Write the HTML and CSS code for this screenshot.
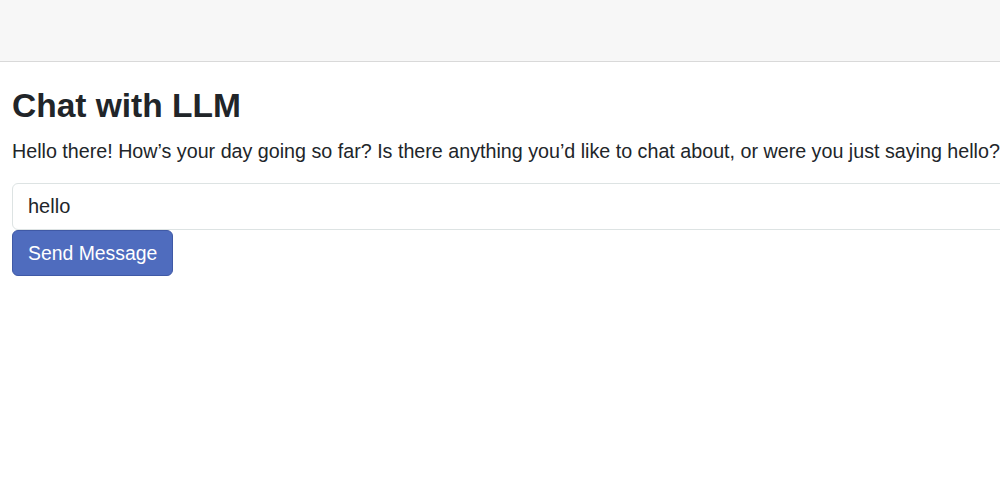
FILE: index.html
```html
<!DOCTYPE html>
<html lang="en">
<head>
<meta charset="utf-8">
<title>Chat with LLM</title>
<link rel="stylesheet" href="styles.css">
</head>
<body>
<header class="topbar"></header>
<main class="chat">
  <h1 class="chat-title">Chat with LLM</h1>
  <p class="chat-reply">Hello there! How’s your day going so far? Is there anything you’d like to chat about, or were you just saying hello?</p>
  <form class="chat-form">
    <input class="chat-input" type="text" value="hello">
    <button class="chat-send" type="button">Send Message</button>
  </form>
</main>
</body>
</html>
```
FILE: styles.css
```css
html, body {
  margin: 0;
  padding: 0;
  overflow: hidden;
  background: #ffffff;
}
body {
  font-family: "Liberation Sans", Arial, sans-serif;
  color: #212529;
  width: 1000px;
}
.topbar {
  height: 61px;
  background: #f7f7f7;
  border-bottom: 1px solid #d9d9d9;
}
.chat {
  padding: 0 12px;
  width: 1200px;
}
.chat-title {
  margin: 24px 0 0;
  font-size: 33.5px;
  font-weight: bold;
  line-height: 40px;
  color: #212529;
}
.chat-reply {
  margin: 10px 0 0;
  font-size: 19.7px;
  line-height: 30px;
  white-space: nowrap;
}
.chat-form {
  display: flex;
  flex-direction: column;
  align-items: flex-start;
  margin-top: 17px;
}
.chat-input {
  box-sizing: border-box;
  width: 1100px;
  height: 47px;
  padding: 0 15px;
  border: 1px solid #dde3e3;
  border-radius: 6px;
  font-family: "Liberation Sans", Arial, sans-serif;
  font-size: 20px;
  color: #212529;
  background: #fff;
  outline: none;
}
.chat-send {
  box-sizing: border-box;
  height: 46px;
  padding: 0 15px;
  border: 1px solid #3f59a6;
  border-radius: 6px;
  background: #4f6cbe;
  color: #ffffff;
  font-family: "Liberation Sans", Arial, sans-serif;
  font-size: 19.4px;
  cursor: pointer;
}
```
